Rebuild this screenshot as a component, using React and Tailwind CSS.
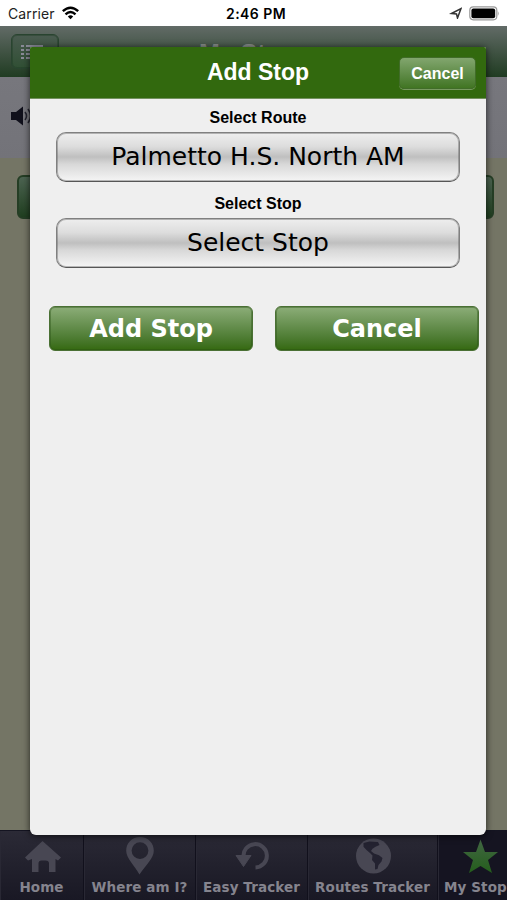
const tabs = [
  { name: "Home", icon: "home", width: "w-[84px]" },
  { name: "Where am I?", icon: "pin", width: "w-[112px]" },
  { name: "Easy Tracker", icon: "history", width: "w-[112px]" },
  { name: "Routes Tracker", icon: "globe", width: "w-[130px]" },
  { name: "My Stops", icon: "star", width: "w-[84px]", active: true },
];

const Icon = ({ name }) => {
  if (name === "home")
    return (
      <svg width="38" height="38" viewBox="0 0 38 38" fill="currentColor">
        <path d="M19.500 4L38 20.500L35 23.500L32.500 22V35H26V26.500Q26 23.500 22.500 23.500H18.500Q15.500 23.500 15.500 26.500V35H9V22L5 23.500L2 20.500Z" />
      </svg>
    );
  if (name === "pin")
    return (
      <svg width="38" height="38" viewBox="0 0 38 38" fill="currentColor" fillRule="evenodd">
        <path d="M19 0C11 0 5.200 6 5.200 13.800C5.200 21 13 28 18.500 37.500C25 28 32.800 21 32.800 13.800C32.800 6 27 0 19 0ZM19 5.200A8.400 8.400 0 1 1 19 22A8.400 8.400 0 1 1 19 5.200Z" />
      </svg>
    );
  if (name === "history")
    return (
      <svg width="38" height="38" viewBox="0 0 38 38" fill="none">
        <path d="M10.500 20A11.700 11.700 0 1 1 22.500 30.500" stroke="currentColor" strokeWidth="4" />
        <path d="M3 18.500H18L10.500 29.500Z" fill="currentColor" stroke="currentColor" strokeLinejoin="round" />
      </svg>
    );
  if (name === "globe")
    return (
      <svg width="38" height="38" viewBox="0 0 38 38">
        <circle cx="19.500" cy="19" r="17.500" fill="currentColor" />
        <path d="M9.500 6L15.500 4.500L24 5L25.500 8L21.500 9.700L18.500 11.700L17 14L20 16.500L25 18.300L28.500 21L27.500 24.500L24.500 28L23.500 32L21 32.500L21 26.500L18 23L18.500 18.500L16 16L12.500 13L9.500 9.700Z" fill="#232230" />
      </svg>
    );
  return (
    <svg width="38" height="38" viewBox="0 0 38 38">
      <defs>
        <linearGradient id="star" x1="0" y1="0" x2="0" y2="1">
          <stop offset="0" stopColor="#426743" />
          <stop offset="1" stopColor="#245e1c" />
        </linearGradient>
      </defs>
      <path d="M19.500 2.500L24 15H37L27 23L31 36L19.500 29L8 36L12 23L2 15H15Z" fill="url(#star)" />
    </svg>
  );
};

function StatusBar() {
  return (
    <div className="relative flex h-[26px] shrink-0 items-center justify-between bg-white px-2 text-black">
      <div className="flex items-center gap-[7px]">
        <span className="font-['Inter'] text-[14px] tracking-[0.1px] text-[#222]">Carrier</span>
        <svg width="17" height="14" viewBox="0 0 17 14" fill="none" stroke="currentColor" strokeWidth="2.400">
          <path d="M.8 5.200Q8.500-1.800 16.200 5.200M3.500 8.400Q8.500 3.800 13.500 8.400" />
          <path d="M5.800 10.500Q8.500 8.200 11.200 10.500L8.500 13.200Z" fill="currentColor" stroke="none" />
        </svg>
      </div>
      <span className="absolute left-[226px] top-[3px] whitespace-nowrap font-['Inter'] text-[14px] font-semibold tracking-[0.450px]">
        2:46 PM
      </span>
      <div className="flex items-center gap-[7px]">
        <svg width="13" height="12" viewBox="0 0 13 12" fill="none" stroke="#333" strokeWidth="1.500">
          <path d="M2.500 6.500L12 1.500L8.500 11L7.500 7Z" />
        </svg>
        <svg width="30" height="15" viewBox="0 0 30 15">
          <rect x=".8" y=".8" width="27" height="13" rx="3.500" fill="none" stroke="#999" strokeWidth="1.200" />
          <rect x="2.400" y="2.400" width="23.800" height="9.800" rx="2" />
          <path d="M28.800 5Q30.500 7.500 28.800 10Z" fill="#999" />
        </svg>
      </div>
    </div>
  );
}

function Select({ children }) {
  return (
    <button className="flex h-[50px] w-[404px] items-center justify-center rounded-[10px] border border-[#808080] border-b-[#565656] bg-[linear-gradient(180deg,#eeeeee_0%,#dddddd_28%,#bfbfbf_50%,#d8d8d8_65%,#f5f5f5_100%)] font-['DejaVu_Sans'] text-[25px] text-black shadow-[inset_0_0_0_1px_rgba(90,90,90,0.4)]">
      {children}
    </button>
  );
}

function Action({ children }) {
  return (
    <button className="flex h-[45px] w-[204px] items-center justify-center rounded-[6px] border border-[#4a7034] bg-linear-to-b from-[#8cad78] to-[#35690f] pt-px font-['DejaVu_Sans'] text-[24px] font-bold text-white shadow-[inset_0_0_0_1px_rgba(40,80,20,0.4)]">
      {children}
    </button>
  );
}

function App() {
  return (
    <div className="relative flex h-[900px] w-[507px] flex-col overflow-hidden bg-[#747565]">
      <StatusBar />
      {/* page under the dialog */}
      <div className="flex h-[51px] shrink-0 justify-between bg-linear-to-b from-[#626b67] to-[#203c22] pl-[11px] pt-[8px]">
        <div className="flex h-[35px] w-[48px] items-center rounded-[6px] border border-[#294430] bg-linear-to-b from-[#4a5b50] to-[#304f34] pl-[9px] pt-px text-[#8a8b98] shadow-[inset_0_0_0_1px_rgba(30,60,35,0.4)]">
          <svg width="22" height="14" viewBox="0 0 22 14" fill="none" stroke="currentColor" strokeWidth="2">
            <path d="M0 1H3M5 1H22M0 5H3M5 5H22M0 9H3M5 9H22M0 13H3M5 13H22" />
          </svg>
        </div>
        <div className="mr-[197px] pt-px font-['Liberation_Sans'] text-[25px] font-bold text-[#858b87]">My Stops</div>
      </div>
      <div className="flex h-[81px] shrink-0 items-start bg-linear-to-b from-[#77777d] to-[#737379] pl-[10px] pt-[29px]">
        <svg width="25" height="20" viewBox="0 0 25 20" fill="#10101b">
          <path d="M1 6H6L13 .5V19.500L6 14H1Z" />
          <path d="M15 6Q18 10 15 14M18 3Q23 10 18 17" fill="none" stroke="#24242f" strokeWidth="1.600" />
        </svg>
      </div>
      <div className="min-h-0 flex-1 pl-[17px] pr-[13px] pt-[17px]">
        <div className="h-[44px] rounded-[6px] border-2 border-[#253e25] bg-linear-to-b from-[#4c6351] to-[#203f20]" />
      </div>
      <div className="flex h-[70px] w-[522px] shrink-0 border-t border-[#141421] bg-linear-to-b from-[#2b2a36] to-[#191824]">
        {tabs.map((tab) => (
          <div
            key={tab.name}
            className={`flex shrink-0 flex-col items-center border-r border-[#11101c] pt-[6px] shadow-[inset_1px_0_#292834] ${tab.width} ${tab.active ? "bg-[#151421]" : ""}`}
          >
            <div className="h-[41px] text-[#484753]">
              <Icon name={tab.icon} />
            </div>
            <span className="whitespace-nowrap font-['DejaVu_Sans'] text-[13.500px] font-bold leading-[18px] tracking-[0.1px] text-[#85848e]">
              {tab.name}
            </span>
          </div>
        ))}
      </div>

      {/* dialog */}
      <div className="absolute left-[30px] top-[47px] flex h-[788px] w-[456px] flex-col overflow-hidden rounded-t-[2px] rounded-b-[6px] bg-[#efefef] shadow-[0_1px_7px_rgba(0,0,0,0.7)]">
        <div className="relative flex h-[52px] shrink-0 items-center justify-center border-b border-[#73915f] bg-[#32690e]">
          <h1 className="font-['Liberation_Sans'] text-[23px] font-bold text-white">Add Stop</h1>
          <button className="absolute right-[10px] top-[10px] flex h-[32px] w-[77px] items-center justify-center rounded-[5px] border border-[#416c29] bg-linear-to-b from-[#82a66e] to-[#417522] pt-px font-['Liberation_Sans'] text-[16px] font-bold text-white shadow-[0_1px_#789960]">
            Cancel
          </button>
        </div>
        <div className="flex flex-col items-center">
          <label className="mt-[8px] h-[25px] font-['Liberation_Sans'] text-[16px] font-bold leading-[22px] text-black">Select Route</label>
          <Select>Palmetto H.S. North AM</Select>
          <label className="mt-[11px] h-[25px] font-['Liberation_Sans'] text-[16px] font-bold leading-[22px] text-black">Select Stop</label>
          <Select>Select Stop</Select>
        </div>
        <div className="mt-[38px] flex justify-between pl-[19px] pr-[7px]">
          <Action>Add Stop</Action>
          <Action>Cancel</Action>
        </div>
      </div>
    </div>
  );
}

export default App;
